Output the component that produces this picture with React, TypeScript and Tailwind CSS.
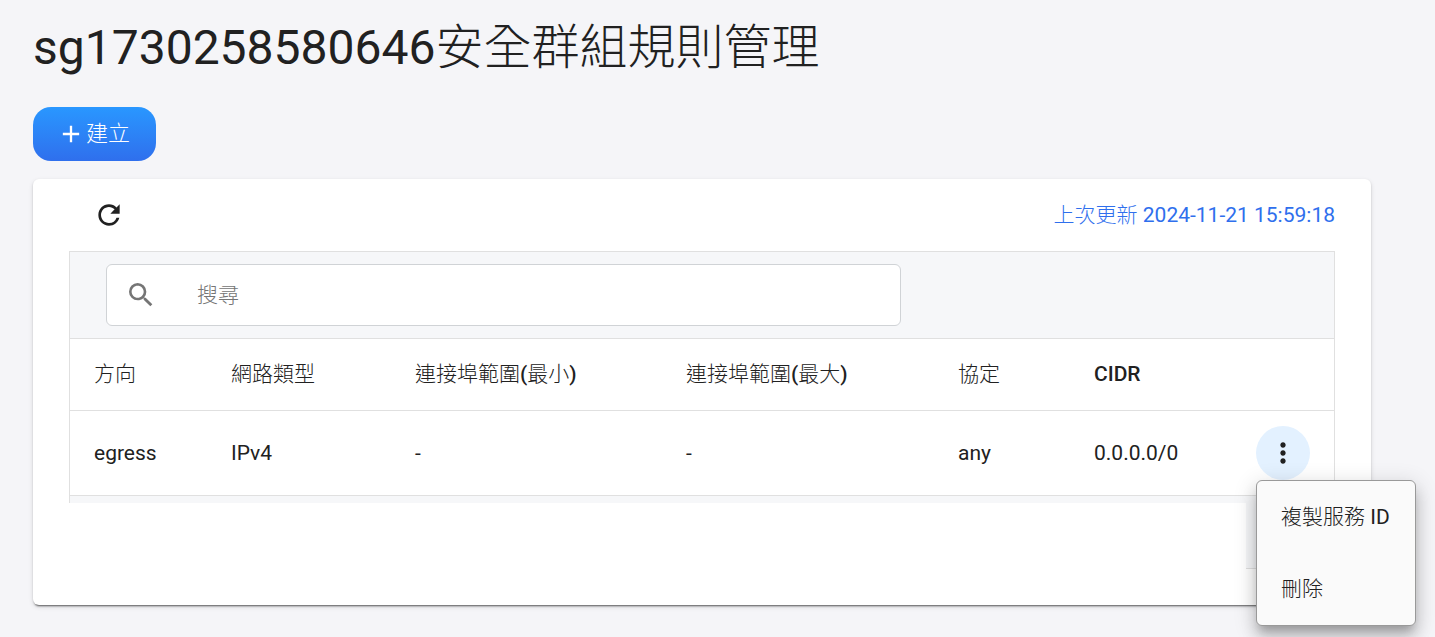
import type { ReactNode } from "react";
import { MdAdd, MdMoreVert, MdRefresh, MdSearch } from "react-icons/md";

type Rule = {
  direction: string;
  etherType: string;
  portMin: string;
  portMax: string;
  protocol: string;
  cidr: string;
};

const rules: Rule[] = [
  { direction: "egress", etherType: "IPv4", portMin: "-", portMax: "-", protocol: "any", cidr: "0.0.0.0/0" },
];

const columns = [
  { label: "方向", width: "w-[137px]" },
  { label: "網路類型", width: "w-[184px]" },
  { label: "連接埠範圍(最小)", width: "w-[271px]" },
  { label: "連接埠範圍(最大)", width: "w-[272px]" },
  { label: "協定", width: "w-[136px]" },
  { label: "CIDR", width: "" },
];

function MenuItem({ children }: { children: ReactNode }) {
  return (
    <button type="button" role="menuitem" className="block h-[72px] w-full px-6 text-left whitespace-nowrap hover:bg-black/5">
      {children}
    </button>
  );
}

function RowActions() {
  return (
    <div className="relative ml-auto size-[54px]">
      <button type="button" aria-label="更多" className="flex size-[54px] items-center justify-center rounded-full bg-[#e3f1ff]">
        <MdMoreVert size={32} />
      </button>
      <div
        role="menu"
        className="absolute top-full left-0 z-10 min-w-40 rounded-md border border-[#999] bg-[#fafafa] shadow-[0_8px_8px_-4px_rgba(0,0,0,0.2),0_12px_15px_1px_rgba(0,0,0,0.14),0_5px_21px_3px_rgba(0,0,0,0.12)]"
      >
        <MenuItem>複製服務 ID</MenuItem>
        <MenuItem>刪除</MenuItem>
      </div>
    </div>
  );
}

function RulesTable() {
  return (
    <div className="border-x border-[#e0e0e0]">
      <table className="w-full table-fixed text-left">
        <thead>
          <tr className="h-[71px] border-b border-[#e0e0e0]">
            {columns.map((c) => (
              <th key={c.label} className={`${c.width} px-6 font-medium whitespace-nowrap`}>
                {c.label}
              </th>
            ))}
            <td className="w-[102px]" />
          </tr>
        </thead>
        <tbody>
          {rules.map((r) => (
            <tr key={r.cidr} className="h-[85px] border-b border-[#e0e0e0]">
              <td className="px-6">{r.direction}</td>
              <td className="px-6">{r.etherType}</td>
              <td className="px-6">{r.portMin}</td>
              <td className="px-6">{r.portMax}</td>
              <td className="px-6">{r.protocol}</td>
              <td className="px-6">{r.cidr}</td>
              <td className="px-6">
                <RowActions />
              </td>
            </tr>
          ))}
        </tbody>
      </table>
    </div>
  );
}

export default function App() {
  return (
    <main className="min-h-screen bg-[#f5f5f8] pt-3 pr-16 pb-8 pl-[33px] font-['Roboto','Noto_Sans_CJK_TC_Light','Noto_Sans_CJK_TC',sans-serif] text-[21px] leading-[30px] text-[#212121]">
      <h1 className="text-[48px] leading-[72px]">sg1730258580646安全群組規則管理</h1>

      <button
        type="button"
        className="mt-[23px] flex h-[54px] min-w-[123px] items-center gap-px rounded-[18px] bg-linear-to-b from-[#2997ff] to-[#2f6fed] px-6 text-[22px] text-white"
      >
        <MdAdd size={28} />
        建立
      </button>

      <section className="mt-[18px] rounded-md bg-white px-9 pb-9 shadow-[0_3px_2px_-2px_rgba(0,0,0,0.5),0_1px_2px_rgba(0,0,0,0.14),0_2px_5px_rgba(0,0,0,0.12)]">
        <div className="flex h-[72px] items-center justify-between">
          <button type="button" aria-label="重新整理" className="ml-6 rounded-full">
            <MdRefresh size={32} />
          </button>
          <span className="text-[#2f6fed]">上次更新 2024-11-21 15:59:18</span>
        </div>

        <div className="border border-[#e0e0e0] bg-[#f6f7f9] py-3 pl-9">
          <label className="flex h-[62px] w-full max-w-[795px] items-center rounded-md border border-[#d0d3d6] bg-white pl-[18px]">
            <MdSearch size={32} className="shrink-0 text-[#757575]" />
            <input
              type="text"
              aria-label="搜尋"
              placeholder="搜尋"
              className="ml-10 min-w-0 flex-1 bg-transparent outline-none placeholder:text-[#757575]"
            />
          </label>
        </div>

        <RulesTable />

        <div className="h-[7px] border-x border-[#e0e0e0] bg-[#f6f7f9]" />
        <div className="flex h-[66px] justify-end">
          <div className="w-[89px] border-r border-b border-[#e0e0e0] bg-[#f6f7f9]" />
        </div>
      </section>
    </main>
  );
}
